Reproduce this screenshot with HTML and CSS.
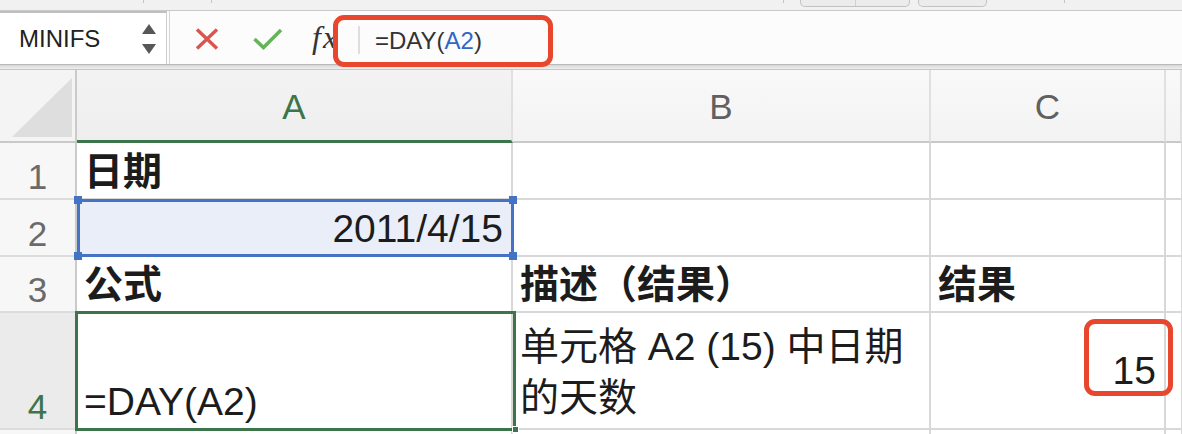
FILE: index.html
```html
<!DOCTYPE html>
<html lang="zh-CN">
<head>
    <meta charset="UTF-8">
    <meta name="viewport" content="width=device-width, initial-scale=1.0">
    <title>DAY 函数</title>
    <link rel="stylesheet" href="styles.css">
</head>
<body>
    <div class="app">
        <div class="top-strip">
            <span class="tick tick-1"></span>
            <span class="tick tick-2"></span>
            <span class="tick tick-3"></span>
            <div class="seg-group"><span></span><span></span></div>
            <div class="seg-group seg-single"><span></span></div>
            <span class="tick tick-4"></span>
        </div>

        <div class="formula-bar">
            <div class="name-box">
                <span class="name">MINIFS</span>
                <span class="spinner"><i class="up"></i><i class="down"></i></span>
            </div>
            <div class="fb-actions">
                <svg class="icon-cancel" width="24" height="22" viewBox="0 0 24 22">
                    <path d="M2 1.5 L22 20.5 M22 1.5 L2 20.5" stroke="#d9564f" stroke-width="3.4" fill="none"/>
                </svg>
                <svg class="icon-enter" width="30" height="22" viewBox="0 0 30 22">
                    <path d="M1.5 11 L10.5 19.5 L28 2" stroke="#67b35b" stroke-width="3.6" fill="none"/>
                </svg>
                <span class="fx">fx</span>
            </div>
            <div class="formula-input">
                <span class="caret-line"></span>
                <span class="formula">=DAY(<span class="ref">A2</span>)</span>
            </div>
        </div>
        <div class="fb-shade"></div>

        <div class="sheet">
            <div class="corner"><span class="corner-tri"></span></div>
            <div class="col-head active">A</div>
            <div class="col-head">B</div>
            <div class="col-head">C</div>
            <div class="col-head"></div>

            <div class="row-head">1</div>
            <div class="cell bold">日期</div>
            <div class="cell"></div>
            <div class="cell"></div>
            <div class="cell"></div>

            <div class="row-head">2</div>
            <div class="cell num ref-cell">2011/4/15
                <i class="hd tl"></i><i class="hd tr"></i><i class="hd bl"></i><i class="hd br"></i>
            </div>
            <div class="cell"></div>
            <div class="cell"></div>
            <div class="cell"></div>

            <div class="row-head">3</div>
            <div class="cell bold">公式</div>
            <div class="cell bold">描述（结果）</div>
            <div class="cell bold">结果</div>
            <div class="cell"></div>

            <div class="row-head active">4</div>
            <div class="cell active-cell">=DAY(A2)<i class="fill-handle"></i></div>
            <div class="cell wrap">单元格 A2 (15) 中日期<br>的天数</div>
            <div class="cell num mid">15</div>
            <div class="cell"></div>

            <div class="row-head"></div>
            <div class="cell"></div>
            <div class="cell"></div>
            <div class="cell"></div>
            <div class="cell"></div>
        </div>

        <div class="callout callout-formula"></div>
        <div class="callout callout-result"></div>
    </div>
</body>
</html>
```

FILE: styles.css
```css
* {
    margin: 0;
    padding: 0;
    box-sizing: border-box;
}

body {
    width: 1182px;
    height: 434px;
    overflow: hidden;
    background: #ffffff;
    font-family: "Liberation Sans", Arial, "Noto Sans CJK SC", sans-serif;
    color: #1c1c1c;
}

.app {
    position: relative;
    width: 1182px;
    height: 434px;
    overflow: hidden;
}

/* strip of the ribbon above the formula bar */
.top-strip {
    display: flex;
    align-items: flex-start;
    height: 11px;
    background: #f1f1f1;
    border-bottom: 1px solid #c9c9c9;
}

.tick {
    width: 1px;
    height: 3px;
    background: #c6c6c6;
}

.tick-1 { margin-left: 143px; }
.tick-2 { margin-left: 67px; }
.tick-3 { margin-left: 571px; }
.tick-4 { margin-left: 77px; }

.seg-group {
    display: flex;
    width: 110px;
    height: 7px;
    margin-left: 16px;
    background: #ececec;
    border: 1px solid #c2c2c2;
    border-top: none;
    border-radius: 0 0 5px 5px;
}

.seg-group span {
    flex: 1;
}

.seg-group span + span {
    border-left: 1px solid #d0d0d0;
}

.seg-single {
    width: 69px;
    margin-left: 8px;
}

/* formula bar */
.formula-bar {
    display: flex;
    height: 54px;
    background: #fcfcfc;
    border-bottom: 1px solid #b9b9b9;
}

.name-box {
    display: flex;
    align-items: center;
    width: 167px;
    padding: 0 10px 0 19px;
    background: #ffffff;
    border-top: 2px solid #bfbfbf;
    border-right: 1px solid #cfcfcf;
    font-size: 24px;
    color: #222222;
}

.spinner {
    display: flex;
    flex-direction: column;
    gap: 10px;
    margin-left: auto;
}

.spinner i {
    display: block;
    width: 0;
    height: 0;
    border-left: 7px solid transparent;
    border-right: 7px solid transparent;
}

.spinner .up {
    border-bottom: 10px solid #575757;
}

.spinner .down {
    border-top: 10px solid #575757;
}

.fb-actions {
    display: flex;
    align-items: center;
    width: 188px;
    margin-left: 2px;
    padding-left: 25px;
    border-left: 1px solid #d6d6d6;
}

.icon-cancel {
    margin-top: 3px;
}

.icon-enter {
    margin-left: 34px;
    margin-top: 3px;
}

.fx {
    margin-left: 29px;
    font-family: "Liberation Serif", "Times New Roman", serif;
    font-style: italic;
    font-size: 32px;
    letter-spacing: 2px;
    color: #333333;
}

.formula-input {
    display: flex;
    align-items: center;
    flex: 1;
    padding-left: 1px;
}

.caret-line {
    width: 2px;
    height: 28px;
    margin-top: 4px;
    background: #dedede;
}

.formula {
    margin-left: 15px;
    padding-top: 6px;
    font-size: 24px;
    color: #333333;
}

.formula .ref {
    color: #3266c4;
}

.fb-shade {
    height: 5px;
    background: linear-gradient(#d6d6d6, #efefef);
    border-bottom: 1px solid #c6c6c6;
}

/* worksheet grid */
.sheet {
    display: grid;
    grid-template-columns: 77px 436px 418px 235px 16px;
    grid-template-rows: 73px 57px 57px 56px 117px 40px;
}

.corner {
    display: flex;
    align-items: flex-end;
    justify-content: flex-end;
    padding: 0 3px 4px 0;
    background: #f4f4f4;
    border-right: 2px solid #cacaca;
    border-bottom: 2px solid #c9c9c9;
}

.corner-tri {
    width: 0;
    height: 0;
    border-left: 60px solid transparent;
    border-bottom: 59px solid #dedede;
}

.col-head {
    display: flex;
    align-items: center;
    justify-content: center;
    padding-top: 3px;
    background: linear-gradient(#f9f9f9, #f3f3f3);
    border-right: 2px solid #e0e0e0;
    border-bottom: 2px solid #c9c9c9;
    font-size: 35px;
    color: #606060;
}

.col-head.active {
    background: linear-gradient(#f3f3f3, #eeeeee);
    border-bottom: 3px solid #3b7549;
    color: #3b7549;
}

.row-head {
    display: flex;
    align-items: flex-end;
    justify-content: center;
    padding-bottom: 4px;
    background: #f7f7f7;
    border-right: 2px solid #cacaca;
    border-bottom: 2px solid #dcdcdc;
    font-size: 35px;
    line-height: 1;
    color: #6a6a6a;
}

.row-head.active {
    background: #ebebeb;
    color: #3b7549;
}

.cell {
    display: flex;
    align-items: flex-end;
    padding: 0 8px 4px 7px;
    background: #ffffff;
    border-right: 2px solid #d8d8d8;
    border-bottom: 2px solid #d8d8d8;
    font-size: 39px;
    line-height: 44px;
    white-space: nowrap;
}

.cell.bold {
    font-weight: 700;
}

.cell.num {
    justify-content: flex-end;
}

.cell.mid {
    align-items: center;
    padding-bottom: 0;
}

.cell.wrap {
    display: block;
    padding-top: 8px;
    line-height: 51px;
}

/* referenced cell, blue frame with corner handles */
.ref-cell {
    position: relative;
    background: #e9eef8;
}

.ref-cell::before {
    content: "";
    position: absolute;
    left: 0;
    top: -1px;
    right: -3px;
    bottom: -2px;
    border: 3px solid #4472c4;
}

.hd {
    position: absolute;
    width: 8px;
    height: 8px;
    background: #4472c4;
}

.hd.tl { left: -3px; top: -4px; }
.hd.tr { right: -6px; top: -4px; }
.hd.bl { left: -3px; bottom: -5px; }
.hd.br { right: -6px; bottom: -5px; }

/* active cell, green frame */
.active-cell {
    position: relative;
}

.active-cell::after {
    content: "";
    position: absolute;
    left: -2px;
    top: -2px;
    right: -5px;
    bottom: -3px;
    border: 3px solid #3b7549;
}

.fill-handle {
    position: absolute;
    right: -8px;
    bottom: -5px;
    width: 7px;
    height: 7px;
    background: #3b7549;
    border: 1px solid #ffffff;
    z-index: 1;
}

/* red annotation frames */
.callout {
    position: absolute;
    border: 5px solid #e8462d;
    border-radius: 11px;
    z-index: 2;
}

.callout-formula {
    left: 333px;
    top: 15px;
    width: 220px;
    height: 52px;
}

.callout-result {
    left: 1084px;
    top: 319px;
    width: 89px;
    height: 77px;
}
```
